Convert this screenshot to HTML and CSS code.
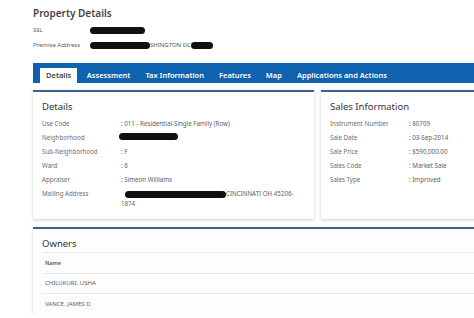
FILE: index.html
```html
<!DOCTYPE html>
<html lang="en">
<head>
    <meta charset="UTF-8">
    <title>Property Details</title>
    <link rel="stylesheet" href="styles.css">
</head>
<body>
    <div class="page">
        <!-- Header -->
        <h1>Property Details</h1>
        <div class="info-row">
            <span class="info-label">SSL</span>
            <span class="info-value"><i class="redact" style="width: 55px"></i></span>
        </div>
        <div class="info-row">
            <span class="info-label">Premise Address</span>
            <span class="info-value"><i class="redact" style="width: 60px"></i>SHINGTON DC<i class="redact" style="width: 22px"></i></span>
        </div>

        <!-- Tabs -->
        <ul class="tabs">
            <li class="active">Details</li>
            <li>Assessment</li>
            <li>Tax Information</li>
            <li>Features</li>
            <li>Map</li>
            <li>Applications and Actions</li>
        </ul>

        <div class="cards">
            <div class="card">
                <h2>Details</h2>
                <dl class="fields">
                    <dt>Use Code</dt><dd>: 011 - Residential-Single Family (Row)</dd>
                    <dt>Neighborhood</dt><dd><i class="redact" style="width: 59px; margin-left: -2px"></i></dd>
                    <dt>Sub-Neighborhood</dt><dd>: F</dd>
                    <dt>Ward</dt><dd>: 6</dd>
                    <dt>Appraiser</dt><dd>: Simeon Williams</dd>
                    <dt>Mailing Address</dt><dd><span class="line"><i class="redact" style="width: 101px; margin-left: 4px"></i>CINCINNATI OH 45206-</span>1874</dd>
                </dl>
            </div>
            <div class="card">
                <h2>Sales Information</h2>
                <dl class="fields">
                    <dt>Instrument Number</dt><dd>: 80709</dd>
                    <dt>Sale Date</dt><dd>: 03-Sep-2014</dd>
                    <dt>Sale Price</dt><dd>: $590,000.00</dd>
                    <dt>Sales Code</dt><dd>: Market Sale</dd>
                    <dt>Sales Type</dt><dd>: Improved</dd>
                </dl>
            </div>
        </div>

        <!-- Owners -->
        <div class="card owners">
            <h2>Owners</h2>
            <table>
                <tr><th>Name</th></tr>
                <tr><td>CHILUKURI, USHA</td></tr>
                <tr><td>VANCE, JAMES D</td></tr>
            </table>
        </div>
    </div>
</body>
</html>
```

FILE: styles.css
```css
* {
    margin: 0;
    padding: 0;
    box-sizing: border-box;
}
body {
    background-color: #fff;
    font-family: "Noto Sans", "Open Sans", sans-serif;
    color: #555;
    overflow: hidden;
}
.page {
    width: 540px;
    padding: 5px 0 0 33px;
}
h1 {
    font-size: 10px;
    font-weight: 600;
    color: #444;
    line-height: 16px;
    margin-bottom: 2px;
}
.info-row {
    display: flex;
    font-size: 6px;
    line-height: 15px;
    color: #5e5e5e;
}
.info-label {
    width: 57px;
}
.info-value {
    display: flex;
    align-items: center;
    color: #555;
}
.redact {
    display: inline-block;
    height: 7px;
    background-color: #111;
    border-radius: 4px;
}
.tabs {
    list-style: none;
    display: flex;
    align-items: flex-end;
    margin-top: 10px;
    height: 20px;
    padding-left: 7px;
    background-color: #0f62ad;
}
.tabs li {
    font-size: 7.5px;
    font-weight: 600;
    color: #fff;
    padding: 0 7.5px;
    line-height: 15px;
}
.tabs li.active {
    background-color: #fff;
    color: #444;
    padding: 0 6px;
    margin-right: 2px;
}
.cards {
    display: grid;
    grid-template-columns: 281px 1fr;
    gap: 7px;
    margin-top: 7px;
}
.card {
    background-color: #fff;
    border-top: 2px solid #3e5f92;
    box-shadow: 0 1px 3px rgba(0, 0, 0, 0.2);
    padding: 7px 9px 10px;
    min-height: 127px;
}
.card h2 {
    font-size: 9.5px;
    font-weight: 400;
    color: #333;
    line-height: 16px;
    margin-bottom: 4px;
}
.fields {
    display: grid;
    grid-template-columns: 79px 1fr;
    font-size: 6.2px;
    line-height: 10px;
    row-gap: 4px;
}
.fields dt {
    color: #6e6e6e;
}
.fields dd {
    color: #5e5e5e;
}
.fields .line {
    display: flex;
    align-items: center;
}
.owners {
    margin-top: 8px;
    background-color: #fdfdfd;
    padding: 7px 9px 0;
    min-height: 0;
}
.owners h2 {
    margin-bottom: 0;
}
.owners table {
    width: 100%;
    border-collapse: collapse;
    font-size: 6px;
}
.owners th,
.owners td {
    text-align: left;
    border-top: 1px solid #e8e8e8;
    padding: 0 3px;
    height: 20.5px;
    color: #5e5e5e;
}
.owners th {
    font-size: 5.5px;
    font-weight: 600;
    color: #555;
}
```
